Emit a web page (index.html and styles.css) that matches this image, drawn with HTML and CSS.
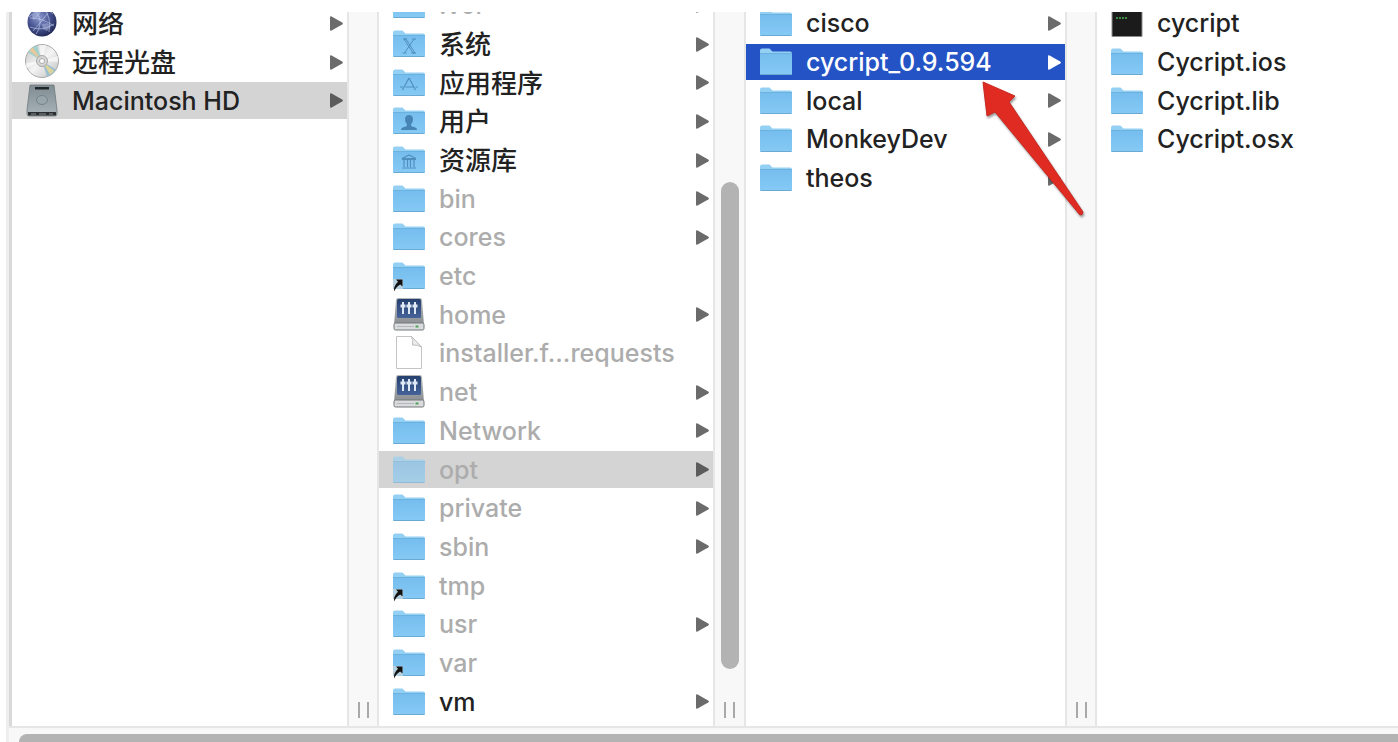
FILE: index.html
```
<!DOCTYPE html>
<html lang="zh-CN">
<head>
  <meta charset="utf-8">
  <meta name="viewport" content="width=device-width, initial-scale=1">
  <title>opt</title>
  <link rel="stylesheet" href="styles.css">
</head>
<body>
  <svg class="sprite" aria-hidden="true">
    <defs>
      <linearGradient id="g-folder" x1="0" y1="0" x2="0" y2="1">
        <stop offset="0" stop-color="#75bdee"/><stop offset="1" stop-color="#86caf5"/>
      </linearGradient>
      <radialGradient id="g-globe" cx=".4" cy=".35" r=".7">
        <stop offset="0" stop-color="#8d9bd0"/><stop offset=".55" stop-color="#46528f"/><stop offset="1" stop-color="#1f2650"/>
      </radialGradient>
      <linearGradient id="g-disc" x1="0" y1="0" x2="1" y2="1">
        <stop offset="0" stop-color="#c4c4c4"/><stop offset=".5" stop-color="#f4f4f4"/><stop offset="1" stop-color="#bdbdbd"/>
      </linearGradient>
      <linearGradient id="g-hd" x1="0" y1="0" x2="0" y2="1">
        <stop offset="0" stop-color="#7f8c92"/><stop offset="1" stop-color="#a9b4b9"/>
      </linearGradient>
      <linearGradient id="g-screen" x1="0" y1="0" x2="0" y2="1">
        <stop offset="0" stop-color="#26416f"/><stop offset="1" stop-color="#46639a"/>
      </linearGradient>
      <linearGradient id="g-case" x1="0" y1="0" x2="0" y2="1">
        <stop offset="0" stop-color="#b5b8ba"/><stop offset="1" stop-color="#8b8e90"/>
      </linearGradient>
    </defs>
    <symbol id="folder" viewBox="0 0 34 36">
      <path d="M1 6.500q0-2 2-2h7.500l3 3H31q2 0 2 2V15H1z" fill="#93d0f4"/>
      <path d="M1 9h32v20.500q0 1.500-1.500 1.500h-29Q1 31 1 29.500z" fill="url(#g-folder)"/>
      <path d="M1 9.500h32" stroke="#6cb2df"/>
      <path d="M1.500 30.500h31" stroke="#69a9d2"/>
    </symbol>
    <symbol id="alias" viewBox="0 0 34 36">
      <use href="#folder"/>
      <path d="M1 21h10v10H1z" fill="#b4cfe0"/>
      <path d="M4 21.500h6.500v7l-2.300-2q-4 2-6 7-1-5 3.800-9.700z" fill="#111"/>
    </symbol>
    <symbol id="globe" viewBox="0 0 34 36">
      <circle cx="17" cy="17" r="14.500" fill="url(#g-globe)"/>
      <path d="M4 12q6-7 14-8 6 0 10 5M5 22q12 5 24-3M10 6q6 6 5 13t-4 10M18 3q9 9 6 24M5 13q13 0 24 8M8 26l7-8 8-10" fill="none" stroke="#c5d0f1" stroke-width=".8" opacity=".75"/>
      <path d="M7 10l5-4 4 1-3 5-5 3zM17 19l6-1 3 3-4 5-4-2z" fill="#b7c3e8" opacity=".5"/>
    </symbol>
    <symbol id="disc" viewBox="0 0 34 36">
      <circle cx="17" cy="17" r="16.500" fill="url(#g-disc)" stroke="#999" stroke-width=".8"/>
      <path d="M17 17L3 8.500Q6 3 12 1.500z" fill="#a2d0cb"/>
      <path d="M17 17L4.500 6.500 8 3.500z" fill="#e9c79a"/>
      <path d="M17 17l5 15.500q6-2 9-7z" fill="#9ebfd0"/>
      <path d="M17 17l8 13.500 4-3.500z" fill="#dcd49a"/>
      <path d="M17 17L14 1h7zM17 17L1 19v5zM17 17l16-5v6z" fill="#fff" opacity=".6"/>
      <circle cx="17" cy="17" r="5.500" fill="#d7d7d7" stroke="#a7a7a7"/>
      <circle cx="17" cy="17" r="2.500" fill="#fff" stroke="#aaa"/>
    </symbol>
    <symbol id="drive" viewBox="0 0 34 36">
      <path d="M5 2h24l3 25v4q0 2-2 2H4q-2 0-2-2v-4z" fill="url(#g-hd)" stroke="#6e797e" stroke-width=".8"/>
      <path d="M10 4h14v2.500H10z" fill="#20272a"/>
      <ellipse cx="17" cy="17" rx="5.500" ry="4.500" fill="#98a5aa" stroke="#76838a"/>
      <path d="M3 29h28v3.500H3z" fill="#2b2f31"/>
      <path d="M6 31h5M14 31h7M24 31h4" stroke="#889195"/>
    </symbol>
    <symbol id="server" viewBox="0 0 34 36">
      <path d="M6 1h22q2 0 2 2l2 25H2L4 3q0-2 2-2z" fill="url(#g-case)"/>
      <rect x="5" y="2" width="24" height="19" rx="1.500" fill="url(#g-screen)"/>
      <path d="M11 5v12M17 5v12M23 5v12" stroke="#dfe8f5" stroke-width="2"/>
      <path d="M8.500 9h5M14.500 9h5M20.500 9h5" stroke="#dfe8f5" stroke-width="3"/>
      <rect x="2" y="26" width="30" height="7" rx="1.500" fill="#d9dbdc" stroke="#75787a"/>
      <path d="M5 29.500h17" stroke="#b5b8ba"/>
      <path d="M25 28.500v2" stroke="#4ea05a" stroke-width="3"/>
    </symbol>
    <symbol id="file" viewBox="0 0 34 36">
      <path d="M4.500 1.500h15l10 10.500v21.500h-25z" fill="#fff" stroke="#c4c4c4"/>
      <path d="M19.500 1.500q2 4 1 8.500 5-.5 9 2z" fill="#eee" stroke="#bdbdbd"/>
    </symbol>
    <symbol id="exec" viewBox="0 0 34 36">
      <path d="M2 0h30v31.500H2z" fill="#1b1b1b" stroke="#8c8c8c"/>
      <path d="M6 13h12" stroke="#3c8d45" stroke-width="2" stroke-dasharray="2 1"/>
    </symbol>
    <symbol id="arrow" viewBox="0 0 13 15">
      <path d="M0 1.500Q0-.3 1.600.5l10.600 6.100q1.400.9 0 1.800L1.600 14.500Q0 15.300 0 13.500z" fill="currentColor"/>
    </symbol>
  </svg>

  <main class="browser">
    <div class="columns">
      <nav class="column first" aria-label="电脑">
        <ul class="list">
          <li><a class="item" href="#"><svg class="icon"><use href="#globe"/></svg><span class="name zh">网络</span><svg class="arrow"><use href="#arrow"/></svg></a></li>
          <li><a class="item" href="#"><svg class="icon"><use href="#disc"/></svg><span class="name zh">远程光盘</span><svg class="arrow"><use href="#arrow"/></svg></a></li>
          <li><a class="item open" href="#"><svg class="icon"><use href="#drive"/></svg><span class="name">Macintosh HD</span><svg class="arrow"><use href="#arrow"/></svg></a></li>
        </ul>
      </nav>
      <div class="divider"><span class="grip"></span></div>

      <nav class="column second" aria-label="Macintosh HD">
        <ul class="list scrolled">
          <li><a class="item dim" href="#"><svg class="icon"><use href="#folder"/></svg><span class="name">.vol</span><svg class="arrow"><use href="#arrow"/></svg></a></li>
          <li><a class="item" href="#"><svg class="icon" viewBox="0 0 34 36"><use href="#folder"/><path d="M12 13h2l9 14h-2zM22 13l-9.500 14M11 13h4M20 13h4M10.500 27h4M19 27h5" fill="none" stroke="#4f8fbf"/></svg><span class="name zh">系统</span><svg class="arrow"><use href="#arrow"/></svg></a></li>
          <li><a class="item" href="#"><svg class="icon" viewBox="0 0 34 36"><use href="#folder"/><path d="M17 13l-6.500 12M17 13l6.500 12M8 22h3M13.500 22h8M23.500 22h2.500" fill="none" stroke="#4f8fbf" stroke-width="1.200"/></svg><span class="name zh">应用程序</span><svg class="arrow"><use href="#arrow"/></svg></a></li>
          <li><a class="item" href="#"><svg class="icon" viewBox="0 0 34 36"><use href="#folder"/><path d="M17 12q4 0 4 4.500 0 3-2 5 0 2 3 2.500 3 .5 3 3H9q0-2.500 3-3 3-.5 3-2.500-2-2-2-5Q13 12 17 12z" fill="#4684b4"/></svg><span class="name zh">用户</span><svg class="arrow"><use href="#arrow"/></svg></a></li>
          <li><a class="item" href="#"><svg class="icon" viewBox="0 0 34 36"><use href="#folder"/><path d="M10 16.500l7-3.500 7 3.500zM10 17.500h14M12 18v7M15.500 18v7M18.500 18v7M22 18v7M10 26h14" fill="none" stroke="#4f8fbf" stroke-width="1.200"/></svg><span class="name zh">资源库</span><svg class="arrow"><use href="#arrow"/></svg></a></li>
          <li><a class="item dim" href="#"><svg class="icon"><use href="#folder"/></svg><span class="name">bin</span><svg class="arrow"><use href="#arrow"/></svg></a></li>
          <li><a class="item dim" href="#"><svg class="icon"><use href="#folder"/></svg><span class="name">cores</span><svg class="arrow"><use href="#arrow"/></svg></a></li>
          <li><a class="item dim" href="#"><svg class="icon"><use href="#alias"/></svg><span class="name">etc</span></a></li>
          <li><a class="item dim" href="#"><svg class="icon"><use href="#server"/></svg><span class="name">home</span><svg class="arrow"><use href="#arrow"/></svg></a></li>
          <li><a class="item dim" href="#"><svg class="icon"><use href="#file"/></svg><span class="name">installer.f...requests</span></a></li>
          <li><a class="item dim" href="#"><svg class="icon"><use href="#server"/></svg><span class="name">net</span><svg class="arrow"><use href="#arrow"/></svg></a></li>
          <li><a class="item dim" href="#"><svg class="icon"><use href="#folder"/></svg><span class="name">Network</span><svg class="arrow"><use href="#arrow"/></svg></a></li>
          <li><a class="item dim open faded" href="#"><svg class="icon"><use href="#folder"/></svg><span class="name">opt</span><svg class="arrow"><use href="#arrow"/></svg></a></li>
          <li><a class="item dim" href="#"><svg class="icon"><use href="#folder"/></svg><span class="name">private</span><svg class="arrow"><use href="#arrow"/></svg></a></li>
          <li><a class="item dim" href="#"><svg class="icon"><use href="#folder"/></svg><span class="name">sbin</span><svg class="arrow"><use href="#arrow"/></svg></a></li>
          <li><a class="item dim" href="#"><svg class="icon"><use href="#alias"/></svg><span class="name">tmp</span></a></li>
          <li><a class="item dim" href="#"><svg class="icon"><use href="#folder"/></svg><span class="name">usr</span><svg class="arrow"><use href="#arrow"/></svg></a></li>
          <li><a class="item dim" href="#"><svg class="icon"><use href="#alias"/></svg><span class="name">var</span></a></li>
          <li><a class="item" href="#"><svg class="icon"><use href="#folder"/></svg><span class="name">vm</span><svg class="arrow"><use href="#arrow"/></svg></a></li>
        </ul>
      </nav>
      <div class="divider track"><span class="thumb"></span><span class="grip"></span></div>

      <nav class="column third" aria-label="opt">
        <ul class="list">
          <li><a class="item" href="#"><svg class="icon"><use href="#folder"/></svg><span class="name">cisco</span><svg class="arrow"><use href="#arrow"/></svg></a></li>
          <li><a class="item selected" href="#"><svg class="icon"><use href="#folder"/></svg><span class="name">cycript_0.9.594</span><svg class="arrow"><use href="#arrow"/></svg></a></li>
          <li><a class="item" href="#"><svg class="icon"><use href="#folder"/></svg><span class="name">local</span><svg class="arrow"><use href="#arrow"/></svg></a></li>
          <li><a class="item" href="#"><svg class="icon"><use href="#folder"/></svg><span class="name">MonkeyDev</span><svg class="arrow"><use href="#arrow"/></svg></a></li>
          <li><a class="item" href="#"><svg class="icon"><use href="#folder"/></svg><span class="name">theos</span><svg class="arrow"><use href="#arrow"/></svg></a></li>
        </ul>
      </nav>
      <div class="divider"><span class="grip"></span></div>

      <nav class="column last" aria-label="cycript_0.9.594">
        <ul class="list">
          <li><a class="item" href="#"><svg class="icon"><use href="#exec"/></svg><span class="name">cycript</span></a></li>
          <li><a class="item" href="#"><svg class="icon"><use href="#folder"/></svg><span class="name">Cycript.ios</span></a></li>
          <li><a class="item" href="#"><svg class="icon"><use href="#folder"/></svg><span class="name">Cycript.lib</span></a></li>
          <li><a class="item" href="#"><svg class="icon"><use href="#folder"/></svg><span class="name">Cycript.osx</span></a></li>
        </ul>
      </nav>
    </div>
    <div class="scrollbar"><div class="bar"></div></div>
  </main>

  <svg class="pointer" viewBox="0 0 102 138" aria-hidden="true">
    <path d="M1 1L33 15l-6 6 74 110q0 3-3 3L13 31l-8 4z" fill="#df2b22" stroke="#c92a22"/>
  </svg>
</body>
</html>
```
FILE: styles.css
```
* {
  box-sizing: border-box;
}
body {
  margin: 0;
  height: 100vh;
  padding: 12px 0 0 6px;
  background: #fff;
  color: #222;
  font-family: Inter, "Noto Sans CJK SC", sans-serif;
  font-size: 25px;
  overflow: hidden;
}
.sprite {
  position: absolute;
  width: 0;
  height: 0;
}

.browser {
  display: flex;
  flex-direction: column;
  height: 100%;
  border-left: 3px solid #eee;
}
.columns {
  display: flex;
  flex: 1;
  min-height: 0;
  border-left: 3px solid #d9d9d9;
}
.column {
  display: flex;
  flex-direction: column;
  flex: none;
  overflow: hidden;
}
.first { width: 335px; }
.second { width: 334px; }
.third { width: 319px; }
.last { flex: 1; }

/* every column shares the same row grid, the second one is scrolled down */
.list {
  display: grid;
  grid-template-rows: repeat(19, 1fr);
  flex: 1;
  margin: -8px 0 -13px;
  padding: 0;
  list-style: none;
}
.scrolled {
  margin: -26px 0 5px;
}
.list li {
  display: flex;
  min-height: 0;
  padding: 1px 0;
}
.item {
  display: flex;
  align-items: center;
  flex: 1;
  gap: 13px;
  padding: 0 4px 0 13px;
  color: inherit;
  line-height: 36px;
  text-decoration: none;
  white-space: nowrap;
}
.icon {
  flex: none;
  width: 34px;
  height: 36px;
}
.name {
  flex: 1;
  font-weight: 500;
}
.zh {
  padding-top: 2px;
  font-size: 26px;
  line-height: 34px;
}
.arrow {
  flex: none;
  width: 13px;
  height: 15px;
  color: #6b6b6b;
}
.dim .name {
  color: #acacac;
}
.open {
  background: #d4d4d4;
}
.open .arrow {
  color: #5c5c5c;
}
.faded .icon {
  opacity: 0.6;
}
.selected {
  background: #2453c6;
  color: #fff;
}
.selected .arrow {
  color: #fff;
}

.divider {
  display: flex;
  flex-direction: column;
  align-items: center;
  flex: none;
  width: 32px;
  padding-bottom: 8px;
  background: #f8f8f8;
  border: solid #e6e6e6;
  border-width: 0 2px;
}
.track {
  width: 33px;
}
.grip {
  width: 11px;
  height: 16px;
  margin-top: auto;
  border: solid #a9a9a9;
  border-width: 0 2px;
}
.thumb {
  width: 18px;
  height: 69%;
  margin-top: 170px;
  border-radius: 9px;
  background: #b3b3b3;
}

.scrollbar {
  height: 16px;
  padding: 6px 0 0 10px;
  border-top: 2px solid #e6e6e6;
  background: #f8f8f8;
}
.bar {
  height: 100%;
  border-radius: 8px 0 0 0;
  background: #b3b3b3;
}

.pointer {
  position: absolute;
  top: 81px;
  left: 982px;
  width: 102px;
  height: 138px;
  filter: drop-shadow(1px 2px 1px rgba(0, 0, 0, 0.4));
}
```
